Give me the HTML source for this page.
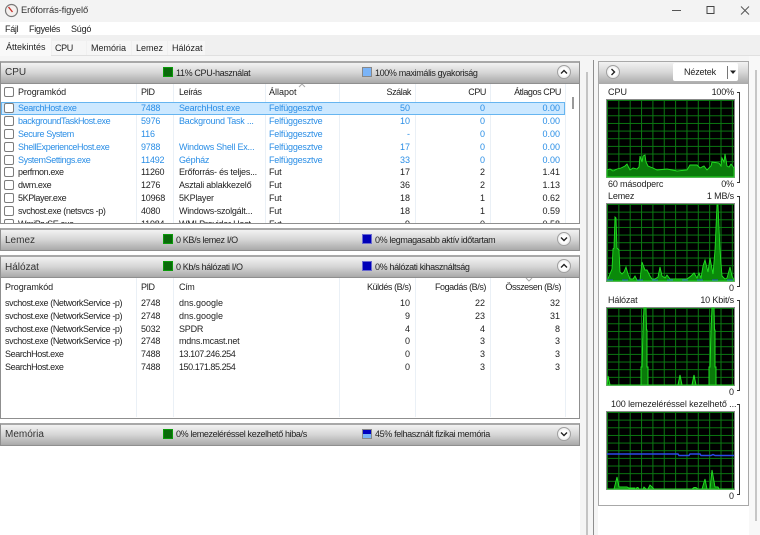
<!DOCTYPE html>
<html><head><meta charset="utf-8">
<style>
html,body{margin:0;padding:0;width:760px;height:535px;overflow:hidden;background:#fff}
body{font-family:"Liberation Sans",sans-serif;font-size:9px;color:#222;position:relative}
#w{position:absolute;left:0;top:0;width:760px;height:535px;overflow:hidden;filter:blur(.3px)}
.a,.t{position:absolute}
.t{white-space:nowrap;line-height:12px;height:12px}
.sec{position:absolute;left:0;width:580px;box-sizing:border-box;border:1px solid #8f8f8f;border-top-width:2px;border-top-color:#a8a8a8;background:linear-gradient(#f2f2f2 0,#d8d8d8 45%,#a9a9a9 100%)}
.h{font-size:10px;color:#333;margin-top:1px}
.s{letter-spacing:-.36px}
.sq{position:absolute;width:8px;height:8px;border:1px solid #888}
.g{background:#0a6a0a;border-color:#0a9a0a}
.b{background:#0000b8;border-color:#6a6ad0}
.cb{position:absolute;left:4px;width:8px;height:8px;border:1px solid #7c7c7c;border-radius:2px;background:#fff}
.v{position:absolute;width:1px;background:#eaf0f6}
.c0{left:18px;letter-spacing:-.4px}.c1{left:141px;letter-spacing:-.2px}.c2{left:179px;letter-spacing:-.22px}.c3{left:269px;letter-spacing:-.2px}
.n0{left:5px;letter-spacing:-.4px}
.r1,.r2,.r3{text-align:right;width:60px}
.r1{left:350px}.r2{left:425px}.r3{left:500px}
.hr{margin-left:1px;letter-spacing:-.42px}
.u{color:#2a8ee6}
.circ{position:absolute;width:14px;height:14px;border-radius:50%;border:1px solid #a0a0a0;background:radial-gradient(#fff 40%,#dcdcdc);box-sizing:border-box}
.br{position:absolute;left:737px;width:3px;border:1px solid #333;border-left:none;height:91px;box-sizing:border-box}
.rp{letter-spacing:-.15px}
</style></head><body>
<div id="w">
<!-- title bar -->
<div class="a" style="left:0;top:0;width:760px;height:22px;background:#f3f3f3"></div>
<svg class="a" style="left:4px;top:3px" width="15" height="15" viewBox="0 0 15 15"><circle cx="7.5" cy="7.5" r="6" fill="#f4f0ee" stroke="#777" stroke-width="1.2"/><path d="M4.5 4 L8.5 9" stroke="#c8302a" stroke-width="1.4"/></svg>
<span class="t" style="left:21px;top:4px;font-size:9.4px;letter-spacing:-.1px;color:#333">Erőforrás-figyelő</span>
<svg class="a" style="left:670px;top:4px" width="85" height="13" viewBox="0 0 85 13"><path d="M2 6.5H11" stroke="#555" stroke-width="1"/><rect x="37" y="2.5" width="7" height="7" fill="none" stroke="#444" stroke-width="1"/><path d="M71 2.5L79 10.5M79 2.5L71 10.5" stroke="#555" stroke-width="1"/></svg>
<!-- menu -->
<div class="a" style="left:0;top:22px;width:760px;height:13px;background:#fff"></div>
<span class="t" style="left:5px;top:23px;letter-spacing:-.3px">Fájl</span><span class="t" style="left:29px;top:23px;letter-spacing:-.3px">Figyelés</span><span class="t" style="left:71px;top:23px;letter-spacing:-.2px">Súgó</span>
<!-- tabs -->
<div class="a" style="left:0;top:35px;width:760px;height:21px;background:#f0f0f0;border-bottom:1px solid #e0e0e0;box-sizing:border-box"></div>
<div class="a" style="left:0;top:38px;width:51px;height:18px;background:#f9f9f9"></div>
<div class="a" style="left:52px;top:41px;width:34px;height:14px;background:#f6f6f6"></div>
<div class="a" style="left:87px;top:41px;width:44px;height:14px;background:#f6f6f6"></div>
<div class="a" style="left:132px;top:41px;width:35px;height:14px;background:#f6f6f6"></div>
<div class="a" style="left:168px;top:41px;width:37px;height:14px;background:#f6f6f6"></div>
<span class="t" style="left:6px;top:41px">Áttekintés</span><span class="t" style="left:55px;top:42px;letter-spacing:-.4px">CPU</span><span class="t" style="left:91px;top:42px">Memória</span><span class="t" style="left:136px;top:42px">Lemez</span><span class="t" style="left:172px;top:42px">Hálózat</span>
<div class="a" style="left:0;top:56px;width:760px;height:5px;background:#f5f5f5"></div>
<div class="a" style="left:580px;top:56px;width:18px;height:479px;background:#f5f5f5"></div>
<div class="a" style="left:586px;top:72px;width:2px;height:463px;background:#c4c4c4"></div>
<div class="a" style="left:593px;top:60px;width:1px;height:475px;background:#8e8e8e"></div>
<div class="a" style="left:749px;top:56px;width:11px;height:479px;background:#f8f8f8"></div>
<div class="a" style="left:755px;top:70px;width:2px;height:451px;background:#c6c6c6"></div>

<!-- CPU section -->
<div class="a" style="left:0;top:84px;width:580px;height:140px;background:#fff;border:1px solid #8f8f8f;border-top:none;border-bottom:1px solid #8f8f8f;box-sizing:border-box;overflow:hidden">
 <div class="a" style="left:-1px;top:0;width:580px;height:140px">
  <div class="v" style="left:136px;top:0;height:140px"></div><div class="v" style="left:173px;top:0;height:140px"></div><div class="v" style="left:265px;top:0;height:140px"></div><div class="v" style="left:339px;top:0;height:140px"></div><div class="v" style="left:415px;top:0;height:140px"></div><div class="v" style="left:490px;top:0;height:140px"></div><div class="v" style="left:565px;top:0;height:140px"></div>
  <div class="a" style="left:1px;top:18px;width:564px;height:13px;background:#cce8ff;border:1px solid #66b5f0;box-sizing:border-box"></div>
  <div class="a" style="left:572px;top:13px;width:2px;height:12px;background:#9a9a9a"></div>
  <!-- header -->
  <span class="cb" style="top:3px"></span>
  <span class="t c0" style="top:2px;letter-spacing:-.1px">Programkód</span><span class="t c1" style="top:2px;letter-spacing:-.5px">PID</span><span class="t c2" style="top:2px;letter-spacing:-.4px">Leírás</span><span class="t c3" style="top:2px;letter-spacing:0">Állapot</span><span class="t r1 hr" style="top:2px">Szálak</span><span class="t r2 hr" style="top:2px">CPU</span><span class="t r3 hr" style="top:2px">Átlagos CPU</span>
  <svg class="a" style="left:298px;top:-1px" width="8" height="5"><path d="M1 4L4 1L7 4" fill="none" stroke="#aaa"/></svg>
  <!-- rows -->
  <span class="cb" style="top:19px"></span><span class="t c0 u" style="top:18px">SearchHost.exe</span><span class="t c1 u" style="top:18px">7488</span><span class="t c2 u" style="top:18px">SearchHost.exe</span><span class="t c3 u" style="top:18px">Felfüggesztve</span><span class="t r1 u" style="top:18px">50</span><span class="t r2 u" style="top:18px">0</span><span class="t r3 u" style="top:18px">0.00</span>
  <span class="cb" style="top:32px"></span><span class="t c0 u" style="top:31px">backgroundTaskHost.exe</span><span class="t c1 u" style="top:31px">5976</span><span class="t c2 u" style="top:31px">Background Task ...</span><span class="t c3 u" style="top:31px">Felfüggesztve</span><span class="t r1 u" style="top:31px">10</span><span class="t r2 u" style="top:31px">0</span><span class="t r3 u" style="top:31px">0.00</span>
  <span class="cb" style="top:45px"></span><span class="t c0 u" style="top:44px">Secure System</span><span class="t c1 u" style="top:44px">116</span><span class="t c3 u" style="top:44px">Felfüggesztve</span><span class="t r1 u" style="top:44px">-</span><span class="t r2 u" style="top:44px">0</span><span class="t r3 u" style="top:44px">0.00</span>
  <span class="cb" style="top:58px"></span><span class="t c0 u" style="top:57px">ShellExperienceHost.exe</span><span class="t c1 u" style="top:57px">9788</span><span class="t c2 u" style="top:57px">Windows Shell Ex...</span><span class="t c3 u" style="top:57px">Felfüggesztve</span><span class="t r1 u" style="top:57px">17</span><span class="t r2 u" style="top:57px">0</span><span class="t r3 u" style="top:57px">0.00</span>
  <span class="cb" style="top:71px"></span><span class="t c0 u" style="top:70px">SystemSettings.exe</span><span class="t c1 u" style="top:70px">11492</span><span class="t c2 u" style="top:70px">Gépház</span><span class="t c3 u" style="top:70px">Felfüggesztve</span><span class="t r1 u" style="top:70px">33</span><span class="t r2 u" style="top:70px">0</span><span class="t r3 u" style="top:70px">0.00</span>
  <span class="cb" style="top:83px"></span><span class="t c0" style="top:82px">perfmon.exe</span><span class="t c1" style="top:82px">11260</span><span class="t c2" style="top:82px">Erőforrás- és teljes...</span><span class="t c3" style="top:82px">Fut</span><span class="t r1" style="top:82px">17</span><span class="t r2" style="top:82px">2</span><span class="t r3" style="top:82px">1.41</span>
  <span class="cb" style="top:96px"></span><span class="t c0" style="top:95px">dwm.exe</span><span class="t c1" style="top:95px">1276</span><span class="t c2" style="top:95px">Asztali ablakkezelő</span><span class="t c3" style="top:95px">Fut</span><span class="t r1" style="top:95px">36</span><span class="t r2" style="top:95px">2</span><span class="t r3" style="top:95px">1.13</span>
  <span class="cb" style="top:109px"></span><span class="t c0" style="top:108px">5KPlayer.exe</span><span class="t c1" style="top:108px">10968</span><span class="t c2" style="top:108px">5KPlayer</span><span class="t c3" style="top:108px">Fut</span><span class="t r1" style="top:108px">18</span><span class="t r2" style="top:108px">1</span><span class="t r3" style="top:108px">0.62</span>
  <span class="cb" style="top:122px"></span><span class="t c0" style="top:121px">svchost.exe (netsvcs -p)</span><span class="t c1" style="top:121px">4080</span><span class="t c2" style="top:121px">Windows-szolgált...</span><span class="t c3" style="top:121px">Fut</span><span class="t r1" style="top:121px">18</span><span class="t r2" style="top:121px">1</span><span class="t r3" style="top:121px">0.59</span>
  <span class="cb" style="top:135px"></span><span class="t c0" style="top:134px">WmiPrvSE.exe</span><span class="t c1" style="top:134px">11984</span><span class="t c2" style="top:134px">WMI Provider Host</span><span class="t c3" style="top:134px">Fut</span><span class="t r1" style="top:134px">9</span><span class="t r2" style="top:134px">0</span><span class="t r3" style="top:134px">0.58</span>
 </div>
</div>
<div class="sec" style="top:61px;height:23px"></div>
<span class="t h" style="left:5px;top:66px">CPU</span>
<span class="sq g" style="left:163px;top:67px"></span><span class="t s" style="left:176px;top:67px">11% CPU-használat</span>
<span class="sq" style="left:362px;top:67px;background:#7ab4f8"></span><span class="t s" style="left:375px;top:67px">100% maximális gyakoriság</span>
<span class="circ" style="left:557px;top:65px"></span><svg class="a" style="left:560px;top:69px" width="8" height="6"><path d="M1 4.5L4 1.5L7 4.5" fill="none" stroke="#222" stroke-width="1.4"/></svg>

<!-- Lemez -->
<div class="sec" style="top:228px;height:23px"></div>
<span class="t h" style="left:5px;top:234px">Lemez</span>
<span class="sq g" style="left:163px;top:234px"></span><span class="t s" style="left:176px;top:234px">0 KB/s lemez I/O</span>
<span class="sq b" style="left:362px;top:234px"></span><span class="t s" style="left:375px;top:234px">0% legmagasabb aktív időtartam</span>
<span class="circ" style="left:557px;top:232px"></span><svg class="a" style="left:560px;top:236px" width="8" height="6"><path d="M1 1.5L4 4.5L7 1.5" fill="none" stroke="#222" stroke-width="1.4"/></svg>

<!-- Hálózat -->
<div class="a" style="left:0;top:278px;width:580px;height:141px;background:#fff;border:1px solid #8f8f8f;border-top:none;box-sizing:border-box">
 <div class="a" style="left:-1px;top:0;width:580px;height:140px">
  <div class="v" style="left:136px;top:0;height:139px"></div><div class="v" style="left:173px;top:0;height:139px"></div><div class="v" style="left:339px;top:0;height:139px"></div><div class="v" style="left:415px;top:0;height:139px"></div><div class="v" style="left:490px;top:0;height:139px"></div><div class="v" style="left:565px;top:0;height:139px"></div>
  <span class="t n0" style="top:3px;letter-spacing:-.1px">Programkód</span><span class="t c1" style="top:3px;letter-spacing:-.5px">PID</span><span class="t c2" style="top:3px;letter-spacing:-.4px">Cím</span><span class="t r1 hr" style="top:3px">Küldés (B/s)</span><span class="t r2 hr" style="top:3px">Fogadás (B/s)</span><span class="t r3 hr" style="top:3px">Összesen (B/s)</span>
  <svg class="a" style="left:525px;top:-1px" width="8" height="5"><path d="M1 1L4 4L7 1" fill="none" stroke="#aaa"/></svg>
  <span class="t n0" style="top:19px">svchost.exe (NetworkService -p)</span><span class="t c1" style="top:19px">2748</span><span class="t c2" style="top:19px;letter-spacing:0">dns.google</span><span class="t r1" style="top:19px">10</span><span class="t r2" style="top:19px">22</span><span class="t r3" style="top:19px">32</span>
  <span class="t n0" style="top:32px">svchost.exe (NetworkService -p)</span><span class="t c1" style="top:32px">2748</span><span class="t c2" style="top:32px;letter-spacing:0">dns.google</span><span class="t r1" style="top:32px">9</span><span class="t r2" style="top:32px">23</span><span class="t r3" style="top:32px">31</span>
  <span class="t n0" style="top:45px">svchost.exe (NetworkService -p)</span><span class="t c1" style="top:45px">5032</span><span class="t c2" style="top:45px">SPDR</span><span class="t r1" style="top:45px">4</span><span class="t r2" style="top:45px">4</span><span class="t r3" style="top:45px">8</span>
  <span class="t n0" style="top:57px">svchost.exe (NetworkService -p)</span><span class="t c1" style="top:57px">2748</span><span class="t c2" style="top:57px">mdns.mcast.net</span><span class="t r1" style="top:57px">0</span><span class="t r2" style="top:57px">3</span><span class="t r3" style="top:57px">3</span>
  <span class="t n0" style="top:70px">SearchHost.exe</span><span class="t c1" style="top:70px">7488</span><span class="t c2" style="top:70px;letter-spacing:-.45px">13.107.246.254</span><span class="t r1" style="top:70px">0</span><span class="t r2" style="top:70px">3</span><span class="t r3" style="top:70px">3</span>
  <span class="t n0" style="top:83px">SearchHost.exe</span><span class="t c1" style="top:83px">7488</span><span class="t c2" style="top:83px;letter-spacing:-.45px">150.171.85.254</span><span class="t r1" style="top:83px">0</span><span class="t r2" style="top:83px">3</span><span class="t r3" style="top:83px">3</span>
 </div>
</div>
<div class="sec" style="top:255px;height:23px"></div>
<span class="t h" style="left:5px;top:261px">Hálózat</span>
<span class="sq g" style="left:163px;top:261px"></span><span class="t s" style="left:176px;top:261px">0 Kb/s hálózati I/O</span>
<span class="sq b" style="left:362px;top:261px"></span><span class="t s" style="left:375px;top:261px">0% hálózati kihasználtság</span>
<span class="circ" style="left:557px;top:259px"></span><svg class="a" style="left:560px;top:263px" width="8" height="6"><path d="M1 4.5L4 1.5L7 4.5" fill="none" stroke="#222" stroke-width="1.4"/></svg>

<!-- Memória -->
<div class="sec" style="top:423px;height:23px"></div>
<span class="t h" style="left:5px;top:428px">Memória</span>
<span class="sq g" style="left:163px;top:429px"></span><span class="t s" style="left:176px;top:428px">0% lemezeléréssel kezelhető hiba/s</span>
<span class="sq" style="left:362px;top:429px;background:linear-gradient(#0000c0 50%,#7ab4f8 50%)"></span><span class="t s" style="left:375px;top:428px">45% felhasznált fizikai memória</span>
<span class="circ" style="left:557px;top:427px"></span><svg class="a" style="left:560px;top:431px" width="8" height="6"><path d="M1 1.5L4 4.5L7 1.5" fill="none" stroke="#222" stroke-width="1.4"/></svg>

<!-- Right panel -->
<div class="a" style="left:598px;top:61px;width:151px;height:445px;background:#fff;border:1px solid #a8a8a8;box-sizing:border-box"></div>
<div class="a" style="left:599px;top:62px;width:149px;height:22px;background:linear-gradient(#f2f2f2,#d8d8d8 45%,#a9a9a9)"></div>
<span class="circ" style="left:606px;top:65px"></span><svg class="a" style="left:610px;top:68px" width="6" height="8"><path d="M1.5 1L4.5 4L1.5 7" fill="none" stroke="#222" stroke-width="1.4"/></svg>
<div class="a" style="left:673px;top:63px;width:65px;height:18px;background:#fff;border-radius:2px"></div>
<span class="t rp" style="left:684px;top:66px">Nézetek</span>
<div class="a" style="left:727px;top:66px;width:1px;height:13px;background:#777"></div>
<svg class="a" style="left:729px;top:70px" width="8" height="5"><path d="M1 0.5H7L4 4z" fill="#222"/></svg>

<span class="t" style="left:608px;top:86px">CPU</span><span class="t rp" style="left:692px;top:86px;width:42px;text-align:right">100%</span>
<span class="t rp" style="left:608px;top:178px">60 másodperc</span><span class="t rp" style="left:692px;top:178px;width:42px;text-align:right">0%</span>
<span class="t rp" style="left:608px;top:190px">Lemez</span><span class="t rp" style="left:682px;top:190px;width:52px;text-align:right">1 MB/s</span>
<span class="t" style="left:692px;top:282px;width:42px;text-align:right">0</span>
<span class="t rp" style="left:608px;top:294px">Hálózat</span><span class="t rp" style="left:672px;top:294px;width:62px;text-align:right">10 Kbit/s</span>
<span class="t" style="left:692px;top:386px;width:42px;text-align:right">0</span>
<span class="t" style="left:611px;top:398px;letter-spacing:-.1px">100 lemezeléréssel kezelhető ...</span>
<span class="t" style="left:692px;top:490px;width:42px;text-align:right">0</span>
<div class="br" style="top:92px"></div><div class="br" style="top:196px"></div><div class="br" style="top:300px"></div><div class="br" style="top:404px"></div>

<svg class="a" style="left:606px;top:99px" width="129" height="79" viewBox="-1 -1 129 79">
<defs><pattern id="gr" x="0" y="0" width="11.35" height="7.65" patternUnits="userSpaceOnUse"><rect width="11.35" height="7.65" fill="#000"/><path d="M.5 0V7.65M0 .5H11.35" stroke="#0b7a12" stroke-width="1" fill="none"/></pattern></defs>
<rect x="-1" y="-1" width="129" height="79" fill="#888"/><rect width="127" height="77" fill="url(#gr)"/>
<path d="M0 77V70L3 69L6 71L10 69L14 68L18 66L20 64L23 70L26 68L30 69L32 67L33 56L35 62L36 56L38 55L39 62L41 66L46 68L50 70L60 69L70 71L80 70L83 65L90 65L93 68L97 66L100 70L104 66L105 62L112 63L114 66L115 58L117 62L118 54L120 66L122 67L124 64L127 68V77Z" fill="#0a7a0a" stroke="#22e022" stroke-width=".9"/>
</svg>
<svg class="a" style="left:606px;top:203px" width="129" height="79" viewBox="-1 -1 129 79">
<rect x="-1" y="-1" width="129" height="79" fill="#888"/><rect width="127" height="77" fill="url(#gr)"/>
<path d="M0 77L5 65L6 45L7 44L8 13L9 14L10 44L12 46L13 68L15 70L17 68L19 63L21 70L23 75H26L28 72L30 76H33L35 58L38 66L40 66L43 72L45 75H48L51 73L53 63L55 72L58 74L60 71L63 75H80L84 72L87 69L90 74L92 69L94 74L96 62L98 56L101 68L103 54L106 70L108 46L110 1L111 1L113 46L115 72L118 75L120 74L123 63L125 72L127 76V77Z" fill="#0a8a0a" stroke="#22e022" stroke-width=".9"/>
<path d="M0 76H127" stroke="#2a50d0" stroke-width=".9" stroke-dasharray="6 9"/>
</svg>
<svg class="a" style="left:606px;top:307px" width="129" height="79" viewBox="-1 -1 129 79">
<rect x="-1" y="-1" width="129" height="79" fill="#888"/><rect width="127" height="77" fill="url(#gr)"/>
<path d="M0 77L1 68L3 77H34V59H35L36 22L37 0H39L39.500 22H40L40 59H41V77H71L73 67L75 77H85L87 67L89 77H102V59H103L104 22L105 0H107L107.500 22H108L108 59H109V77H127Z" fill="#0a7a0a" stroke="#22e022" stroke-width="1"/>
</svg>
<svg class="a" style="left:606px;top:411px" width="129" height="79" viewBox="-1 -1 129 79">
<rect x="-1" y="-1" width="129" height="79" fill="#888"/><rect width="127" height="77" fill="url(#gr)"/>
<path d="M0 77H7L10 65L12 75H20L22 76H28V77H29L30 75.500H31L32 77H36L37 75L39 77H41L43 73L45 75L47 77H85L87 75.500H89L91 77H95L98 67L100 77H103L105 58L108 75H111L112 77H127Z" fill="#0a7a0a" stroke="#22e022" stroke-width=".9"/>
<path d="M0 42H71L72 43.500H82L83 42H93L94 43.500H104L106 42.500L108 43.500H127" fill="none" stroke="#2a48e8" stroke-width="1.4"/>
</svg>
</div>
</body></html>
